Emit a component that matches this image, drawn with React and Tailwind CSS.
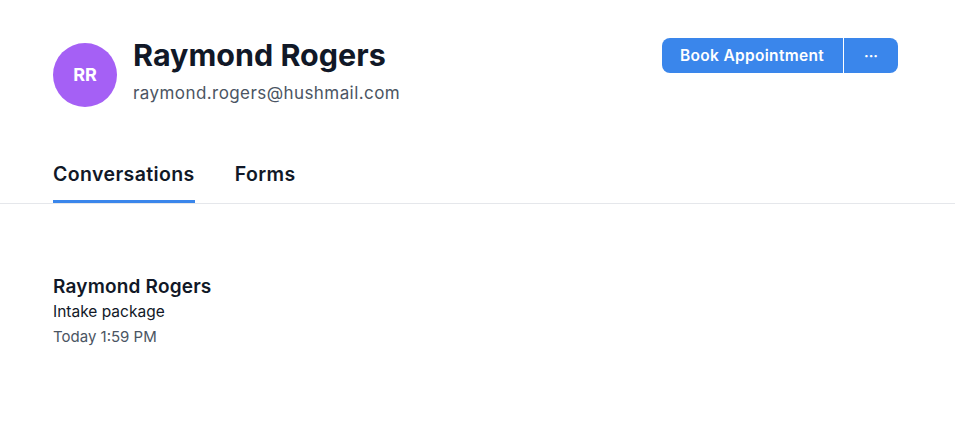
const tabs = ["Conversations", "Forms"];

const App = () => {
  return (
    <div className="min-h-screen bg-white font-['Inter',sans-serif] text-[#111827]">
      {/* Header */}
      <div className="flex items-start justify-between px-[53px] pt-[38px]">
        <div className="flex items-center gap-4 pt-[5px]">
          <div className="flex h-16 w-16 items-center justify-center rounded-full bg-[#a560f5] text-lg font-bold text-white">
            RR
          </div>
          <div className="-mt-[6px]">
            <h1 className="text-[30.5px] font-bold leading-9">Raymond Rogers</h1>
            <p className="mt-[8px] text-[17px] tracking-[0.025em] text-[#4b5563]">raymond.rogers@hushmail.com</p>
          </div>
        </div>
        <div className="mr-[4px] flex h-[35px] overflow-hidden rounded-lg bg-[#3a86eb] text-white">
          <button className="pl-[18px] pr-[19px] text-[15.5px] font-semibold tracking-[0.02em]">Book Appointment</button>
          <div className="w-px bg-white" />
          <button className="w-[54px] text-sm font-bold">···</button>
        </div>
      </div>

      {/* Tabs */}
      <div className="mt-[53px] flex gap-10 border-b border-[#e5e7eb] px-[53px]">
        {tabs.map((tab, i) => (
          <div
            key={tab}
            className={`pb-[11px] text-[19.5px] font-semibold tracking-[0.02em] ${
              i === 0 ? "border-b-[3px] border-[#3a86eb]" : "border-b-[3px] border-transparent"
            }`}
          >
            {tab}
          </div>
        ))}
      </div>

      {/* Conversation */}
      <div className="px-[53px] pt-[69px]">
        <p className="text-[19px] font-semibold leading-7 tracking-[0.01em]">Raymond Rogers</p>
        <p className="-mt-[1px] text-[15.5px] leading-6">Intake package</p>
        <p className="mt-[1px] text-[15px] leading-6 text-[#4b5563]">Today 1:59 PM</p>
      </div>
    </div>
  );
};

export default App;
